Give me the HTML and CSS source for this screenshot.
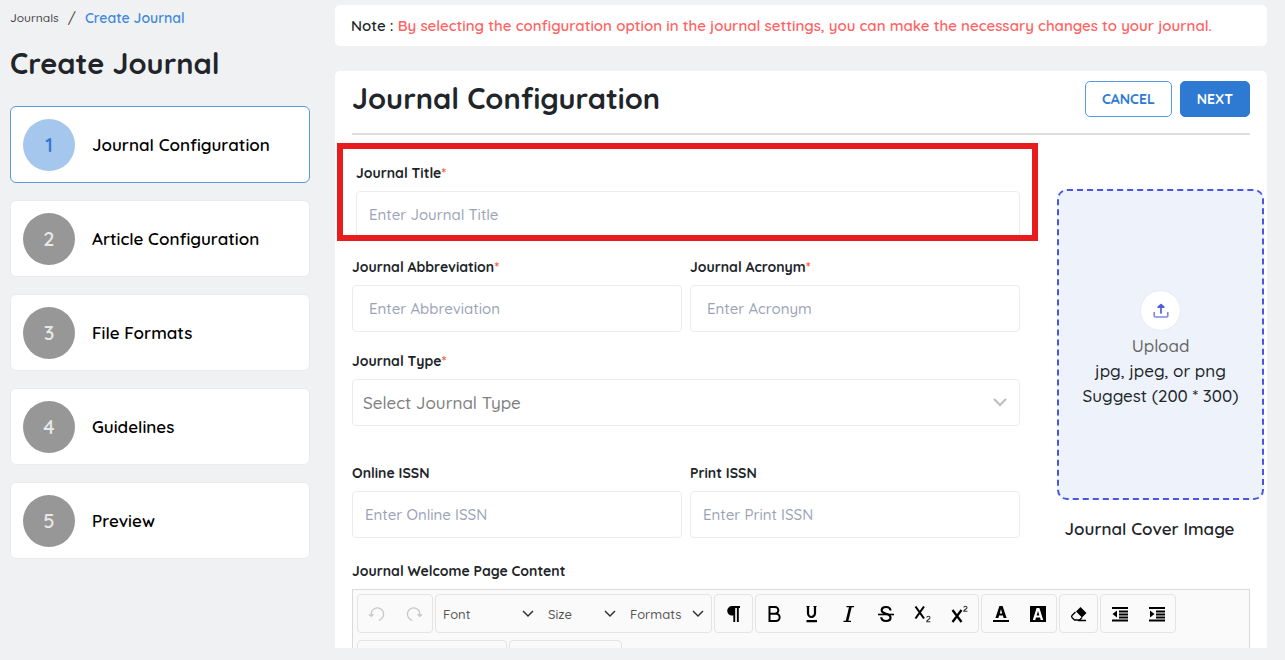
FILE: index.html
```html
<!DOCTYPE html>
<html lang="en">
<head>
    <meta charset="UTF-8">
    <meta name="viewport" content="width=device-width, initial-scale=1">
    <title>Create Journal</title>
    <link rel="stylesheet" href="styles.css">
</head>
<body>

    <div class="page">
        <aside class="sidebar">
            <nav class="breadcrumb">
                <a href="#">Journals</a>
                <span>/</span>
                <a href="#" class="current">Create Journal</a>
            </nav>
            <h1>Create Journal</h1>

            <nav class="steps">
                <a href="#" class="step active"><span class="step-number">1</span>Journal Configuration</a>
                <a href="#" class="step"><span class="step-number">2</span>Article Configuration</a>
                <a href="#" class="step"><span class="step-number">3</span>File Formats</a>
                <a href="#" class="step"><span class="step-number">4</span>Guidelines</a>
                <a href="#" class="step"><span class="step-number">5</span>Preview</a>
            </nav>
        </aside>

        <main>
            <p class="note">Note : <span>By selecting the configuration option in the journal settings, you can make the necessary changes to your journal.</span></p>

            <form class="panel">
                <div class="panel-header">
                    <h2>Journal Configuration</h2>
                    <div class="actions">
                        <button type="button" class="btn">CANCEL</button>
                        <button type="button" class="btn btn-primary">NEXT</button>
                    </div>
                </div>

                <div class="panel-body">
                    <div class="fields">
                        <div class="field wide highlight">
                            <label for="title">Journal Title<span class="required">*</span></label>
                            <input type="text" id="title" class="narrow-pad" placeholder="Enter Journal Title">
                        </div>
                        <div class="field">
                            <label for="abbreviation">Journal Abbreviation<span class="required">*</span></label>
                            <input type="text" id="abbreviation" placeholder="Enter Abbreviation">
                        </div>
                        <div class="field">
                            <label for="acronym">Journal Acronym<span class="required">*</span></label>
                            <input type="text" id="acronym" placeholder="Enter Acronym">
                        </div>
                        <div class="field wide type-field">
                            <label for="type">Journal Type<span class="required">*</span></label>
                            <select id="type">
                                <option>Select Journal Type</option>
                            </select>
                        </div>
                        <div class="field">
                            <label for="online-issn">Online ISSN</label>
                            <input type="text" id="online-issn" class="narrow-pad" placeholder="Enter Online ISSN">
                        </div>
                        <div class="field">
                            <label for="print-issn">Print ISSN</label>
                            <input type="text" id="print-issn" class="narrow-pad" placeholder="Enter Print ISSN">
                        </div>
                    </div>

                    <div class="cover">
                        <label class="upload" for="cover">
                            <span class="upload-icon">
                                <svg width="16" height="16" viewBox="0 0 16 16" fill="none" stroke="#4f5be0" stroke-width="1.7" stroke-linecap="round" stroke-linejoin="round">
                                    <path d="M8 10V2M5.2 4.2L8 1.6l2.8 2.6z" />
                                    <path d="M1.2 9.5v3.2a1.3 1.3 0 0 0 1.3 1.3h11a1.3 1.3 0 0 0 1.3-1.3V9.5" stroke="#7f88ea" />
                                </svg>
                            </span>
                            <span class="upload-title">Upload</span>
                            <span>jpg, jpeg, or png</span>
                            <span>Suggest (200 * 300)</span>
                            <input type="file" id="cover" class="file-input">
                        </label>
                        <p class="cover-label">Journal Cover Image</p>
                    </div>
                </div>

                <div class="editor-field">
                    <p class="editor-label">Journal Welcome Page Content</p>
                    <div class="editor">
                        <div class="toolbar">
                            <div class="tool-group">
                                <button type="button" aria-label="Undo" disabled>
                                    <svg width="18" height="18" viewBox="0 0 20 20" fill="none" stroke="#c8c8c8" stroke-width="1.5"><path d="M3.6 12A7 7 0 1 1 12 17M1 10.5l2.7 2L6 10" /></svg>
                                </button>
                                <button type="button" aria-label="Redo" disabled>
                                    <svg width="18" height="18" viewBox="0 0 20 20" fill="none" stroke="#c8c8c8" stroke-width="1.5"><path d="M16.4 12A7 7 0 1 0 8 17M19 10.5l-2.7 2L14 10" /></svg>
                                </button>
                            </div>
                            <div class="tool-group">
                                <select class="font-select" aria-label="Font"><option>Font</option></select>
                                <select class="size-select" aria-label="Size"><option>Size</option></select>
                                <select class="format-select" aria-label="Formats"><option>Formats</option></select>
                            </div>
                            <div class="tool-group">
                                <button type="button" aria-label="Paragraph">
                                    <svg width="18" height="18" viewBox="0 0 18 18"><path d="M7 1h8v2h-1.2v14h-1.9V3h-1.7v14H8.3v-6.4H7A4.8 4.8 0 0 1 7 1z" /></svg>
                                </button>
                            </div>
                            <div class="tool-group">
                                <button type="button" aria-label="Bold">
                                    <svg width="18" height="18" viewBox="0 0 18 18" fill="none" stroke="#000" stroke-width="2"><path d="M3.500 2H9a3.3 3.3 0 0 1 0 6.7H3.500M3.500 8.700H10a3.600 3.600 0 0 1 0 7.300H3.500zM3.500 1v16" /></svg>
                                </button>
                                <button type="button" aria-label="Underline">
                                    <svg width="18" height="18" viewBox="0 0 18 18" fill="none" stroke="#000" stroke-width="2.2"><path d="M5 1v7a3.5 4 0 0 0 7 0V1M3.5 16.2H14" /><path d="M3.5 1.5h3M10.5 1.5h3" stroke-width="1" /></svg>
                                </button>
                                <button type="button" aria-label="Italic">
                                    <svg width="18" height="18" viewBox="0 0 18 18" fill="none" stroke="#000"><path d="M10.5 1.5L6.9 16.5" stroke-width="2.6" /><path d="M6.5 1.6H14M3.5 16.4H11" stroke-width="1.3" /></svg>
                                </button>
                                <button type="button" aria-label="Strikethrough">
                                    <svg width="18" height="18" viewBox="0 0 18 18" fill="none" stroke="#000" stroke-width="2.2"><path d="M13.5 5.5C13.3 3.2 11.6 2 9 2S4.7 3.2 4.7 5.3C4.7 7.3 6.3 8 9 8.7c3 .8 4.5 1.7 4.5 3.8S11.7 16 9 16s-4.6-1.3-4.7-3.7" /><path d="M1 9.5h16" stroke-width="1.6" /></svg>
                                </button>
                                <button type="button" aria-label="Subscript">
                                    <svg width="18" height="18" viewBox="0 0 18 18" fill="none" stroke="#000"><path d="M1.5 1.5l8.5 12M10 1.5l-8.5 12" stroke-width="2.1" /><path d="M12.7 12.5c.2-1.6 3.3-1.6 3.3.2 0 1.5-3.1 2.2-3.3 4h3.7" stroke="#333" stroke-width="1.1" /></svg>
                                </button>
                                <button type="button" aria-label="Superscript">
                                    <svg width="18" height="18" viewBox="0 0 18 18" fill="none" stroke="#000"><path d="M1.5 5l9 12M10.5 5l-9 12" stroke-width="2.3" /><path d="M12.7 2.5c.2-1.6 3.3-1.6 3.3.2 0 1.3-3.1 1.9-3.3 3.6h3.7" stroke="#333" stroke-width="1.1" /></svg>
                                </button>
                            </div>
                            <div class="tool-group">
                                <button type="button" aria-label="Text color">
                                    <svg width="18" height="18" viewBox="0 0 18 18"><path d="M7.4 1h3.2l4 12h-3l-.7-2.4H7.1L6.4 13h-3zM9 4L7.8 8.4h2.4z" /><path d="M1 15h16v2H1z" /></svg>
                                </button>
                                <button type="button" aria-label="Highlight color">
                                    <svg width="18" height="18" viewBox="0 0 18 18"><path d="M1 1h16v16H1z" /><path d="M7.6 3h2.8l3.8 12h-2.5l-.7-2.6H7L6.3 15H3.8zM9 6l-1.4 4.500h2.800z" fill="#fff" /></svg>
                                </button>
                            </div>
                            <div class="tool-group">
                                <button type="button" aria-label="Clear formatting">
                                    <svg width="18" height="18" viewBox="0 0 18 18"><path d="M10.5 2l6 6-4.5 4.5-6-6z" /><path d="M5.5 7L2 10.5c-.6.7-.6 1.3 0 2L4.5 15h5l2.5-2.5M8 15.5h8" fill="none" stroke="#000" stroke-width="1.3" /></svg>
                                </button>
                            </div>
                            <div class="tool-group">
                                <button type="button" aria-label="Outdent">
                                    <svg width="18" height="18" viewBox="0 0 18 18"><path d="M1 2h16v2H1zM8 5.5h9v2H8zM8 8.5h9v2H8zM8 11.5h9v2H8zM1 14.5h16v2H1zM6 5.5v7L1.5 9z" /></svg>
                                </button>
                                <button type="button" aria-label="Indent">
                                    <svg width="18" height="18" viewBox="0 0 18 18"><path d="M1 2h16v2H1zM8 5.5h9v2H8zM8 8.5h9v2H8zM8 11.5h9v2H8zM1 14.5h16v2H1zM2 5.5v7L6.5 9z" /></svg>
                                </button>
                            </div>
                            <div class="tool-group">
                                <button type="button" aria-label="Align left"></button>
                                <button type="button" aria-label="Align center"></button>
                                <button type="button" aria-label="Align right"></button>
                                <button type="button" aria-label="Justify"></button>
                            </div>
                            <div class="tool-group">
                                <button type="button" aria-label="Table"></button>
                                <button type="button" aria-label="Link"></button>
                                <button type="button" aria-label="Image"></button>
                            </div>
                        </div>
                    </div>
                </div>
            </form>
        </main>
    </div>

</body>
</html>
```
FILE: styles.css
```css
* {
    box-sizing: border-box;
}

body {
    font-family: Quicksand, Lato, sans-serif;
    font-size: 15px;
    font-weight: 500;
    color: #212529;
    background: #f0f1f3;
    margin: 0;
}

a {
    color: inherit;
    text-decoration: none;
}

h1, h2, p {
    margin: 0;
}

input, select, button {
    font-family: inherit;
    font-weight: inherit;
}

.page {
    display: flex;
    gap: 25px;
    height: 100vh;
    padding: 5px 18px 12px 10px;
    overflow: hidden;
}

/* Sidebar */
.sidebar {
    flex: 0 0 300px;
}

.breadcrumb {
    display: flex;
    align-items: center;
    gap: 9px;
    height: 25px;
    font-size: 12px;
    color: #444;
}

.breadcrumb span {
    font-size: 15px;
}

.breadcrumb .current {
    font-size: 14px;
    font-weight: 600;
    color: #4088d8;
}

h1, h2 {
    font-size: 29px;
    line-height: 34px;
    font-weight: 700;
}

h1 {
    margin: 16px 0 26px;
}

.steps {
    display: flex;
    flex-direction: column;
    gap: 17px;
}

.step {
    display: flex;
    align-items: center;
    gap: 17px;
    height: 77px;
    padding: 0 12px;
    background: white;
    border: 1px solid #ebebed;
    border-radius: 6px;
    color: #000;
    font-size: 17px;
    font-weight: 600;
}

.step-number {
    display: flex;
    align-items: center;
    justify-content: center;
    width: 52px;
    height: 52px;
    border-radius: 50%;
    background: #979797;
    color: #e8e8e8;
    font-size: 20px;
}

.step.active {
    border-color: #5799df;
}

.active .step-number {
    background: #a5c6ed;
    color: #2f78d0;
}

/* Main column */
main {
    flex: 1;
    min-width: 0;
    display: flex;
    flex-direction: column;
    gap: 25px;
}

.note {
    padding: 0 16px;
    line-height: 41px;
    background: white;
    border-radius: 5px;
    font-size: 15px;
    font-weight: 600;
}

.note span {
    color: #ff6464;
}

.panel {
    flex: 1;
    min-height: 0;
    overflow: hidden;
    background: white;
    border-radius: 5px 5px 0 0;
}

.panel-header {
    display: flex;
    align-items: flex-start;
    justify-content: space-between;
    margin: 0 17px;
    padding: 10px 0 16px;
    border-bottom: 2px solid #dedede;
}

.actions {
    display: flex;
    gap: 8px;
}

.btn {
    height: 36px;
    padding: 0 16px;
    background: white;
    border: 1px solid #5799df;
    border-radius: 5px;
    color: #2e7ad3;
    font-size: 14px;
    font-weight: 700;
    cursor: pointer;
}

.btn-primary {
    background: #2e7ad3;
    border-color: #2e7ad3;
    color: white;
}

.panel-body {
    display: flex;
    gap: 37px;
    padding: 28px 3px 19px 17px;
}

.fields {
    flex: 1;
    display: grid;
    grid-template-columns: 1fr 1fr;
    gap: 19px 8px;
    align-content: start;
}

.field {
    display: flex;
    flex-direction: column;
    gap: 8px;
    min-width: 0;
}

.wide {
    grid-column: 1 / -1;
}

.field label, .editor-label {
    font-size: 14px;
    line-height: 20px;
    font-weight: 700;
}

.required {
    color: #ff5a36;
}

.field input, .field select {
    width: 100%;
    height: 47px;
    padding: 0 16px;
    background: white;
    border: 1px solid #ececee;
    border-radius: 4px;
    color: #212529;
    font-size: 15px;
}

.field input::placeholder {
    color: #9ca3b8;
    opacity: 1;
}

.field .narrow-pad {
    padding: 0 12px;
}

.type-field {
    margin-bottom: 18px;
}

select {
    appearance: none;
    background: url("data:image/svg+xml,%3Csvg xmlns='http://www.w3.org/2000/svg' width='12' height='8' fill='none' stroke='%23333' stroke-width='1.5'%3E%3Cpath d='M1 1l5 5 5-5'/%3E%3C/svg%3E") no-repeat right 7px center;
}

.field select {
    padding: 0 10px;
    background: url("data:image/svg+xml,%3Csvg xmlns='http://www.w3.org/2000/svg' width='14' height='9' fill='none' stroke='%23bdbdbd' stroke-width='2'%3E%3Cpath d='M1 1l6 6 6-6'/%3E%3C/svg%3E") no-repeat right 12px center;
    color: #808080;
    font-size: 17px;
}

/* Red frame drawn over the title field */
.highlight {
    position: relative;
    padding-left: 4px;
}

.highlight::after {
    content: "";
    position: absolute;
    inset: -20px -18px -3px -15px;
    border: 6px solid #e81c1c;
    pointer-events: none;
}

/* Cover image */
.cover {
    flex: 0 0 207px;
    padding-top: 26px;
    text-align: center;
}

.upload {
    display: flex;
    flex-direction: column;
    align-items: center;
    justify-content: center;
    height: 311px;
    padding-top: 9px;
    background: #eef3fb;
    border: 2px dashed #4a56e2;
    border-radius: 10px;
    font-size: 17px;
    line-height: 25px;
    cursor: pointer;
}

.upload-icon {
    display: flex;
    align-items: center;
    justify-content: center;
    width: 41px;
    height: 41px;
    margin-bottom: 2px;
    background: white;
    border: 1px solid #e6eaf2;
    border-radius: 50%;
}

.upload-title {
    color: #666;
}

.file-input {
    position: absolute;
    width: 1px;
    height: 1px;
    opacity: 0;
}

.cover-label {
    margin-top: 16px;
    padding-right: 22px;
    font-size: 17px;
    line-height: 26px;
    font-weight: 600;
}

/* Editor */
.editor-field {
    padding: 0 17px;
}

.editor-label {
    margin-bottom: 8px;
}

.editor {
    height: 300px;
    padding: 4px;
    background: #fafafa;
    border: 1px solid #dadada;
}

.toolbar {
    display: flex;
    flex-wrap: wrap;
    gap: 7px 2px;
}

.tool-group {
    display: flex;
    height: 39px;
    border: 1px solid #e4e4e4;
    border-radius: 4px;
}

.tool-group button {
    display: flex;
    align-items: center;
    justify-content: center;
    width: 37px;
    padding: 0;
    background: none;
    border: none;
    cursor: pointer;
}

.tool-group select {
    padding: 0 7px;
    border: none;
    color: #555;
    font-size: 13px;
}

.tool-group .font-select {
    width: 105px;
}

.tool-group .size-select {
    width: 82px;
}

.tool-group .format-select {
    width: 88px;
}
```
